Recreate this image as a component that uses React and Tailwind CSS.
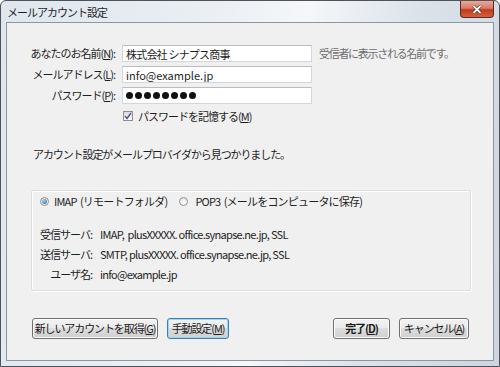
import React, { useState } from "react";

const jp = { fontFamily: '"Noto Sans CJK JP", "Noto Sans", sans-serif' };

function Btn({ children, focused, bold, className }) {
  return (
    <button
      className={
        "h-[21px] rounded-[3px] border px-0 text-[11px] tracking-[-1.1px] whitespace-nowrap text-[#1a1a1a] leading-none flex items-center justify-center bg-[linear-gradient(#f2f2f2_0%,#ebebeb_45%,#dddddd_50%,#cfcfcf_100%)] " +
        (focused
          ? "border-[#3c7fb1] shadow-[inset_0_0_0_1px_#9fd6f5] "
          : "border-[#707070] shadow-[inset_0_0_0_1px_#fcfcfc] ") +
        (bold ? "font-bold " : "") +
        (className || "")
      }
    >
      {children}
    </button>
  );
}

function Radio({ checked }) {
  return (
    <span className="w-[9px] h-[9px] rounded-full border border-[#8f8f8f] bg-[linear-gradient(#e6e6e6,#ffffff)] flex items-center justify-center">
      {checked && <span className="w-[5px] h-[5px] rounded-full bg-[radial-gradient(circle_at_40%_35%,#a9d4f5,#1f5f9e)]" />}
    </span>
  );
}

export default function App() {
  const [remember, setremember] = useState(true);
  const [proto, setproto] = useState("imap");

  return (
    <div
      style={jp}
      className="w-[500px] h-[367px] flex flex-col border border-[#4f5359] rounded-t-[6px] bg-[linear-gradient(100deg,#dfe6ee_0%,#e9eef3_35%,#f5f7f9_55%,#dbe2ea_75%,#cdd6e0_100%)] overflow-hidden"
    >
      {/* title bar */}
      <div className="h-[21px] flex items-start justify-between pl-[6px] pr-[5px]">
        <span className="mt-[3px] text-[11px] tracking-[-1px] text-[#1e1e1e]">メールアカウント設定</span>
        <button className="w-[34px] h-[17px] rounded-b-[4px] border border-t-0 border-[#5a2a22] bg-[linear-gradient(#e9a99c_0%,#d77b67_45%,#c2391f_55%,#d2623d_100%)] flex items-center justify-center">
          <svg width="10" height="9" viewBox="0 0 10 9">
            <path d="M1.5 1 L8.5 8 M8.5 1 L1.5 8" stroke="#3b1a14" strokeWidth="3" />
            <path d="M1.5 1 L8.5 8 M8.5 1 L1.5 8" stroke="#ffffff" strokeWidth="1.8" />
          </svg>
        </button>
      </div>

      {/* client area */}
      <div className="flex-1 mx-[5px] mb-[5px] border border-[#8996a3] bg-[#f0f0f0] text-[11px] text-[#1e1e1e] flex flex-col pt-[22px]">
        <div className="grid grid-cols-[108px_190px_1fr] gap-x-[7px] gap-y-[4px] items-center">
          <span className="text-right tracking-[-1px]">
            あなたのお名前(<u>N</u>):
          </span>
          <input
            defaultValue="株式会社 シナプス商事"
            className="h-[17px] border border-[#d3d6da] border-t-[#b9bcc1] bg-white px-[3px] text-[11px] tracking-[-0.8px] outline-none"
          />
          <span className="text-[#6d6d6d] tracking-[-1.3px]">受信者に表示される名前です。</span>

          <span className="text-right tracking-[-1px]">
            メールアドレス(<u>L</u>):
          </span>
          <input
            defaultValue="info@example.jp"
            className="h-[17px] border border-[#d3d6da] border-t-[#b9bcc1] bg-white px-[3px] text-[11px] outline-none"
          />
          <span />

          <span className="text-right tracking-[-1px]">
            パスワード(<u>P</u>):
          </span>
          <div className="h-[17px] border border-[#d3d6da] border-t-[#b9bcc1] bg-white px-[3px] flex items-center gap-[2px]">
            {Array.from({ length: 8 }).map((_, i) => (
              <span key={i} className="w-[7px] h-[7px] rounded-full bg-[#111]" />
            ))}
          </div>
          <span />
        </div>

        <label className="mt-[5px] ml-[116px] flex items-center gap-[5px] h-[14px]" onClick={() => setremember(!remember)}>
          <span className="w-[10px] h-[10px] border border-[#8f8f8f] bg-[linear-gradient(#dcdcdc,#fbfbfb)] flex items-center justify-center">
            {remember && (
              <svg width="8" height="8" viewBox="0 0 8 8">
                <path d="M1 4 L3 6.5 L7 1" stroke="#4a5a8a" strokeWidth="1.4" fill="none" />
              </svg>
            )}
          </span>
          <span className="tracking-[-1px]">
            パスワードを記憶する(<u>M</u>)
          </span>
        </label>

        <p className="mt-[23px] ml-[26px] tracking-[-1.1px]">アカウント設定がメールプロバイダから見つかりました。</p>

        {/* group box */}
        <div className="mt-[27px] ml-[24px] w-[440px] h-[101px] border border-[#d5dfe5] shadow-[inset_1px_1px_0_#ffffff,1px_1px_0_#ffffff] rounded-[2px] pt-[4px] pl-[8px]">
          <div className="flex items-center h-[14px]">
            <label className="flex items-center gap-[5px] cursor-default" onClick={() => setproto("imap")}>
              <Radio checked={proto === "imap"} />
              <span className="tracking-[-0.8px]">IMAP&nbsp; (リモートフォルダ)</span>
            </label>
            <label className="ml-[12px] flex items-center gap-[7px] cursor-default" onClick={() => setproto("pop3")}>
              <Radio checked={proto === "pop3"} />
              <span className="tracking-[-0.8px]">POP3&nbsp; (メールをコンピュータに保存)</span>
            </label>
          </div>

          <div className="mt-[18px] grid grid-cols-[52px_1fr] gap-x-[8px] gap-y-[6px] leading-[14px]">
            <span className="text-right tracking-[-1px]">受信サーバ:</span>
            <span className="tracking-[-0.7px]">IMAP,&nbsp; plusXXXXX. office.synapse.ne.jp, SSL</span>
            <span className="text-right tracking-[-1px]">送信サーバ:</span>
            <span className="tracking-[-0.7px]">SMTP, plusXXXXX. office.synapse.ne.jp, SSL</span>
            <span className="text-right tracking-[-1px]">ユーザ名:</span>
            <span className="tracking-[-0.7px]">info@example.jp</span>
          </div>
        </div>

        {/* buttons */}
        <div className="mt-[27px] ml-[25px] mr-[24px] flex items-center">
          <Btn className="w-[126px]">
            新しいアカウントを取得(<u>G</u>)
          </Btn>
          <Btn focused className="ml-[9px] w-[62px]">
            手動設定(<u>M</u>)
          </Btn>
          <Btn bold className="ml-auto w-[57px]">
            完了(<u>D</u>)
          </Btn>
          <Btn className="ml-[9px] w-[70px]">
            キャンセル(<u>A</u>)
          </Btn>
        </div>
      </div>
    </div>
  );
}
